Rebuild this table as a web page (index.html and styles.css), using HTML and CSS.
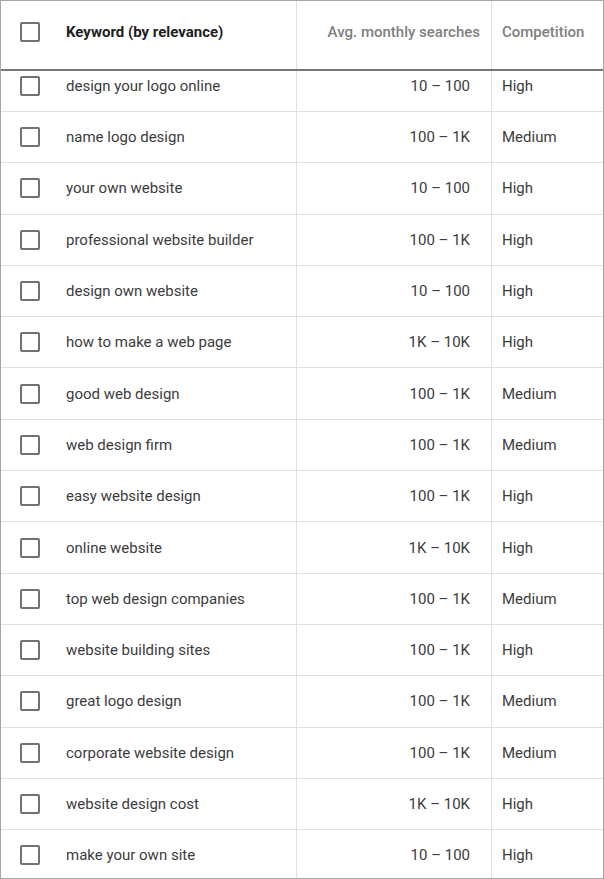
FILE: index.html
```html
<!DOCTYPE html>
<html>
<head>
<meta charset="utf-8">
<link rel="stylesheet" href="styles.css">
</head>
<body>
<div class="table">
  <div class="row head">
    <div class="cell kw"><span class="cb"></span><span class="kw-title">Keyword (by relevance)</span></div>
    <div class="cell num"><span class="h-gray">Avg. monthly searches</span></div>
    <div class="cell comp"><span class="h-gray">Competition</span></div>
  </div>
  <div class="row first">
    <div class="cell kw"><span class="cb"></span>design your logo online</div>
    <div class="cell num">10 – 100</div>
    <div class="cell comp">High</div>
  </div>
  <div class="row"><div class="cell kw"><span class="cb"></span>name logo design</div><div class="cell num">100 – 1K</div><div class="cell comp">Medium</div></div>
  <div class="row"><div class="cell kw"><span class="cb"></span>your own website</div><div class="cell num">10 – 100</div><div class="cell comp">High</div></div>
  <div class="row"><div class="cell kw"><span class="cb"></span>professional website builder</div><div class="cell num">100 – 1K</div><div class="cell comp">High</div></div>
  <div class="row"><div class="cell kw"><span class="cb"></span>design own website</div><div class="cell num">10 – 100</div><div class="cell comp">High</div></div>
  <div class="row"><div class="cell kw"><span class="cb"></span>how to make a web page</div><div class="cell num">1K – 10K</div><div class="cell comp">High</div></div>
  <div class="row"><div class="cell kw"><span class="cb"></span>good web design</div><div class="cell num">100 – 1K</div><div class="cell comp">Medium</div></div>
  <div class="row"><div class="cell kw"><span class="cb"></span>web design firm</div><div class="cell num">100 – 1K</div><div class="cell comp">Medium</div></div>
  <div class="row"><div class="cell kw"><span class="cb"></span>easy website design</div><div class="cell num">100 – 1K</div><div class="cell comp">High</div></div>
  <div class="row"><div class="cell kw"><span class="cb"></span>online website</div><div class="cell num">1K – 10K</div><div class="cell comp">High</div></div>
  <div class="row"><div class="cell kw"><span class="cb"></span>top web design companies</div><div class="cell num">100 – 1K</div><div class="cell comp">Medium</div></div>
  <div class="row"><div class="cell kw"><span class="cb"></span>website building sites</div><div class="cell num">100 – 1K</div><div class="cell comp">High</div></div>
  <div class="row"><div class="cell kw"><span class="cb"></span>great logo design</div><div class="cell num">100 – 1K</div><div class="cell comp">Medium</div></div>
  <div class="row"><div class="cell kw"><span class="cb"></span>corporate website design</div><div class="cell num">100 – 1K</div><div class="cell comp">Medium</div></div>
  <div class="row"><div class="cell kw"><span class="cb"></span>website design cost</div><div class="cell num">1K – 10K</div><div class="cell comp">High</div></div>
  <div class="row"><div class="cell kw"><span class="cb"></span>make your own site</div><div class="cell num">10 – 100</div><div class="cell comp">High</div></div>
</div>
</body>
</html>
```
FILE: styles.css
```css
html, body {
  margin: 0;
  padding: 0;
  background: #fff;
}
.table {
  width: 604px;
  height: 879px;
  box-sizing: border-box;
  border: 1px solid #a6a6a6;
  overflow: hidden;
  font-family: Roboto, "Liberation Sans", sans-serif;
  font-size: 15px;
  color: #3c3c3c;
}
.row {
  display: grid;
  grid-template-columns: 296px 195px 1fr;
  height: 51.3px;
  box-sizing: border-box;
  border-bottom: 1px solid #e0e0e0;
}
.row.head {
  height: 70px;
  border-bottom: 2px solid #777;
}
.head .cell {
  padding-bottom: 6px;
}
.row.first {
  height: 41px;
}
.cell {
  display: flex;
  align-items: center;
  box-sizing: border-box;
  white-space: nowrap;
}
.first .cell {
  padding-bottom: 11px;
}
.kw {
  border-right: 1px solid #e0e0e0;
  padding-left: 19px;
}
.num {
  border-right: 1px solid #e0e0e0;
  justify-content: flex-end;
  padding-right: 21px;
}
.head .num {
  padding-right: 11px;
}
.comp {
  padding-left: 10px;
}
.cb {
  width: 20px;
  height: 20px;
  box-sizing: border-box;
  border: 2px solid #717171;
  border-radius: 2px;
  margin-right: 26px;
  flex: none;
}
.kw-title {
  font-weight: 700;
  color: #212121;
}
.h-gray {
  color: #808080;
  font-weight: 500;
}
```
